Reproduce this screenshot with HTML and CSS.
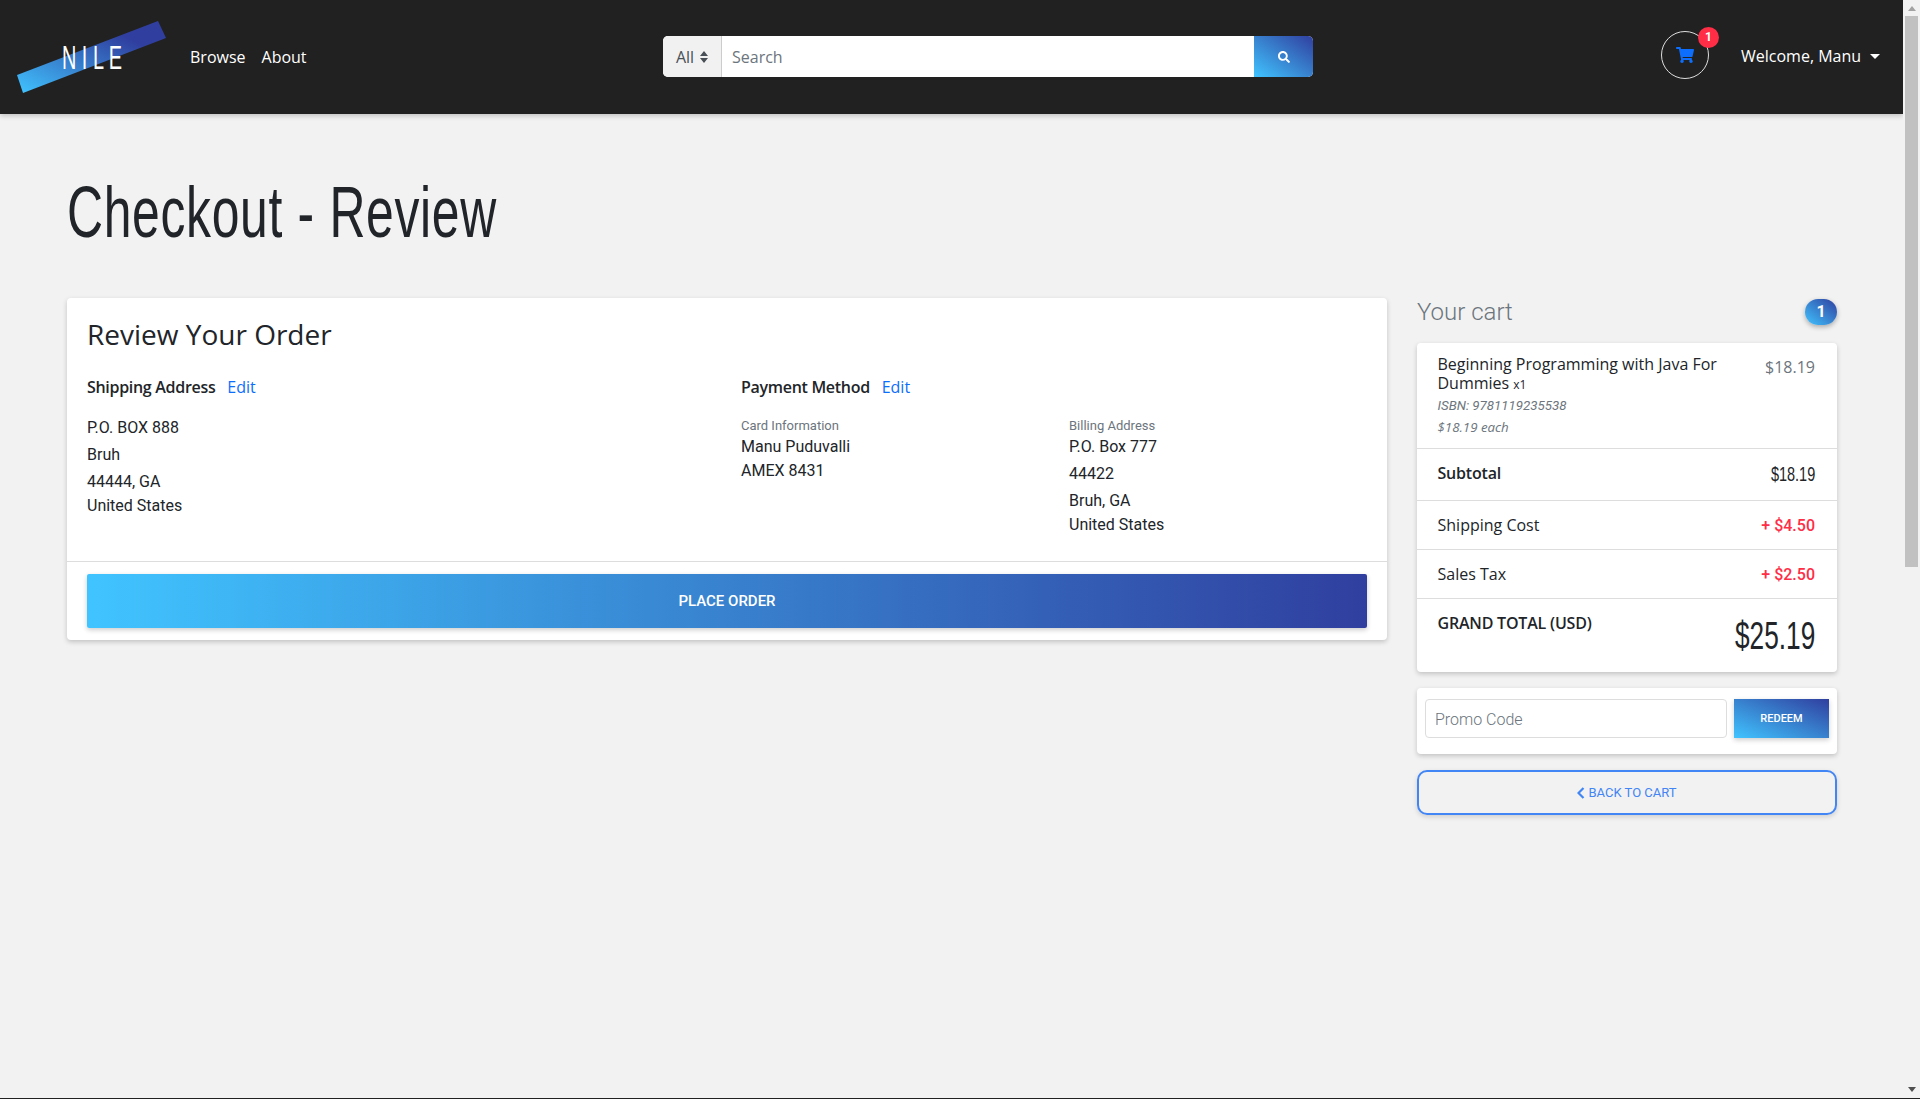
FILE: index.html
```html
<!DOCTYPE html>
<html lang="en">
<head>
    <meta charset="UTF-8">
    <title>Checkout - Review</title>
    <link rel="stylesheet" href="styles.css">
</head>
<body>
    <div class="view">
        <div class="page">
            <nav class="navbar">
                <a class="logo" href="#">
                    <svg width="170" height="114" viewBox="0 0 170 114">
                        <defs>
                            <linearGradient id="logoGrad" x1="0" y1="1" x2="1" y2="0">
                                <stop offset="0" stop-color="#40c4ff"/>
                                <stop offset="0.75" stop-color="#303f9f"/>
                            </linearGradient>
                        </defs>
                        <polygon points="17,75 158,21 166,38 23,93" fill="url(#logoGrad)"/>
                        <text x="62" y="69" class="logo-text" textLength="60" lengthAdjust="spacingAndGlyphs">N I L E</text>
                    </svg>
                </a>
                <a class="nav-link browse" href="#">Browse</a>
                <a class="nav-link" href="#">About</a>
                <form class="search">
                    <div class="search-select">All
                        <svg width="8" height="12" viewBox="0 0 8 12"><path d="M4 0l4 5H0zM4 12L0 7h8z" fill="#495057"/></svg>
                    </div>
                    <input class="search-input" type="text" placeholder="Search">
                    <button class="search-btn" type="button">
                        <svg width="12" height="12" viewBox="0 0 512 512"><path d="M505 442.700L405.300 343c-4.500-4.500-10.600-7-17-7H372c27.600-35.300 44-79.700 44-128C416 93.100 322.900 0 208 0S0 93.100 0 208s93.100 208 208 208c48.300 0 92.700-16.400 128-44v16.300c0 6.400 2.500 12.500 7 17l99.700 99.700c9.400 9.400 24.600 9.400 33.900 0l28.300-28.300c9.400-9.400 9.400-24.600.1-34zM208 336c-70.700 0-128-57.200-128-128 0-70.700 57.200-128 128-128 70.700 0 128 57.200 128 128 0 70.700-57.200 128-128 128z" fill="#fff"/></svg>
                    </button>
                </form>
                <a class="cart-link" href="#">
                    <svg width="18" height="16" viewBox="0 0 576 512"><path d="M528.120 301.319l47.273-208C578.806 78.301 567.391 64 551.990 64H159.208l-9.166-44.810C147.758 8.021 137.930 0 126.529 0H24C10.745 0 0 10.745 0 24v16c0 13.255 10.745 24 24 24h69.883l70.248 343.435C147.325 417.100 136 435.222 136 456c0 30.928 25.072 56 56 56s56-25.072 56-56c0-15.674-6.447-29.835-16.824-40h209.647C430.447 426.165 424 440.326 424 456c0 30.928 25.072 56 56 56s56-25.072 56-56c0-22.172-12.888-41.332-31.579-50.405l5.517-24.276c3.413-15.018-8.002-29.319-23.403-29.319H218.117l-6.545-32h293.145c11.206 0 20.920-7.754 23.403-18.681z" fill="#0d6efd"/></svg>
                    <span class="cart-badge">1</span>
                </a>
                <a class="welcome" href="#">Welcome, Manu<span class="caret"></span></a>
            </nav>

            <main class="content">
                <h1 class="page-title">Checkout - Review</h1>
                <div class="columns">
                    <section class="card review">
                        <div class="review-body">
                            <h2 class="review-title">Review Your Order</h2>
                            <div class="review-grid">
                                <div class="shipping">
                                    <h3 class="sub-head">Shipping Address <a href="#">Edit</a></h3>
                                    <p class="addr">P.O. BOX 888</p>
                                    <p class="addr">Bruh</p>
                                    <p class="addr tight">44444, GA</p>
                                    <p class="addr tight">United States</p>
                                </div>
                                <div class="payment">
                                    <h3 class="sub-head">Payment Method <a href="#">Edit</a></h3>
                                    <div class="payment-cols">
                                        <div>
                                            <small class="label">Card Information</small>
                                            <p class="addr tight">Manu Puduvalli</p>
                                            <p class="addr tight">AMEX 8431</p>
                                        </div>
                                        <div>
                                            <small class="label">Billing Address</small>
                                            <p class="addr">P.O. Box 777</p>
                                            <p class="addr">44422</p>
                                            <p class="addr tight">Bruh, GA</p>
                                            <p class="addr tight">United States</p>
                                        </div>
                                    </div>
                                </div>
                            </div>
                        </div>
                        <div class="review-foot">
                            <button class="place-order" type="button">PLACE ORDER</button>
                        </div>
                    </section>

                    <aside class="sidebar">
                        <div class="cart-head">
                            <span class="cart-title">Your cart</span>
                            <span class="cart-count">1</span>
                        </div>
                        <ul class="card summary">
                            <li class="row item">
                                <div class="item-info">
                                    <div class="item-name">Beginning Programming with Java For Dummies<small>x1</small></div>
                                    <div class="item-meta isbn">ISBN: 9781119235538</div>
                                    <div class="item-meta each">$18.19 each</div>
                                </div>
                                <span class="item-price">$18.19</span>
                            </li>
                            <li class="row subtotal">
                                <strong>Subtotal</strong>
                                <span class="narrow">$18.19</span>
                            </li>
                            <li class="row fee">
                                <span>Shipping Cost</span>
                                <span class="plus">+ $4.50</span>
                            </li>
                            <li class="row fee">
                                <span>Sales Tax</span>
                                <span class="plus">+ $2.50</span>
                            </li>
                            <li class="row total">
                                <strong>GRAND TOTAL (USD)</strong>
                                <span class="narrow grand">$25.19</span>
                            </li>
                        </ul>
                        <div class="card promo">
                            <input class="promo-input" type="text" placeholder="Promo Code">
                            <button class="redeem" type="button">REDEEM</button>
                        </div>
                        <button class="back" type="button">
                            <svg width="8" height="12" viewBox="0 0 8 12"><path d="M6.500 1L1.500 6l5 5" fill="none" stroke="#4285f4" stroke-width="2.200"/></svg>
                            BACK TO CART
                        </button>
                    </aside>
                </div>
            </main>
        </div>
        <div class="scrollbar">
            <span class="arrow-up"></span>
            <div class="thumb"></div>
            <span class="arrow-down"></span>
        </div>
    </div>
    <div class="page-end"></div>
</body>
</html>
```

FILE: styles.css
```css
* {
    box-sizing: border-box;
}
html, body {
    height: 100%;
}
body {
    margin: 0;
    overflow: hidden;
    display: flex;
    flex-direction: column;
    background: #f2f2f2;
    color: #212529;
    font-family: Roboto, sans-serif;
    font-size: 16px;
}
a {
    text-decoration: none;
}
p, h1, h2, h3, ul {
    margin: 0;
    padding: 0;
}
.view {
    flex: 1;
    display: flex;
    min-height: 0;
}
.page {
    flex: 1;
    min-width: 0;
}
.page-end {
    height: 1px;
    background: #212121;
}

/* navbar */
.navbar {
    height: 114px;
    background: #212121;
    box-shadow: 0 2px 5px rgba(0, 0, 0, 0.2);
    display: flex;
    align-items: center;
    font-family: "Open Sans", sans-serif;
}
.logo {
    width: 170px;
    height: 114px;
    flex: none;
    margin-right: 20px;
}
.logo-text {
    font-family: "Liberation Sans", sans-serif;
    font-size: 33px;
    fill: #fff;
}
.nav-link {
    color: #fff;
    font-size: 16px;
    margin-right: 16px;
}
.search {
    position: absolute;
    left: 663px;
    top: 36px;
    width: 650px;
    height: 41px;
    display: flex;
    border-radius: 5px;
    overflow: hidden;
    background: #fff;
}
.search-select {
    width: 59px;
    background: #f1f1f1;
    border-right: 1px solid #ccc;
    color: #495057;
    font-size: 16px;
    display: flex;
    align-items: center;
    justify-content: center;
    gap: 6px;
}
.search-input {
    flex: 1;
    min-width: 0;
    border: 0;
    padding: 0 10px;
    font: 16px "Open Sans", sans-serif;
}
.search-input::placeholder {
    color: #6c757d;
}
.search-btn {
    width: 59px;
    border: 0;
    padding: 0;
    background: linear-gradient(to top right, #40c4ff, #303f9f);
    display: flex;
    align-items: center;
    justify-content: center;
}
.cart-link {
    position: absolute;
    left: 1661px;
    top: 31px;
    width: 48px;
    height: 48px;
    border: 1px solid #ddd;
    border-radius: 50%;
    display: flex;
    align-items: center;
    justify-content: center;
}
.cart-badge {
    position: absolute;
    top: -5px;
    right: -11px;
    width: 21px;
    height: 21px;
    border-radius: 50%;
    background: #ff2d46;
    color: #fff;
    font: 700 12px/21px Roboto, sans-serif;
    text-align: center;
}
.welcome {
    position: absolute;
    left: 1741px;
    top: 45px;
    color: #fff;
    font-size: 16px;
}
.caret {
    display: inline-block;
    margin-left: 9px;
    vertical-align: 3px;
    border-top: 5px solid #fff;
    border-left: 5px solid transparent;
    border-right: 5px solid transparent;
}

/* content */
.content {
    padding: 0 66px 0 67px;
}
.page-title {
    height: 184px;
    padding-top: 56px;
    font-family: "Liberation Sans", sans-serif;
    font-size: 72px;
    font-weight: 400;
    line-height: 84px;
    letter-spacing: 1px;
    white-space: nowrap;
    transform: scaleX(0.692);
    transform-origin: left;
}
.columns {
    display: grid;
    grid-template-columns: 1320px 420px;
    gap: 30px;
    align-items: start;
}
.card {
    background: #fff;
    border-radius: 4px;
    box-shadow: 0 2px 5px rgba(0, 0, 0, 0.2);
}

/* review card */
.review-body {
    height: 264px;
    padding: 17px 20px 0;
    border-bottom: 1px solid #ddd;
}
.review-title {
    font: 400 28px/38px "Open Sans", sans-serif;
}
.review-grid {
    display: grid;
    grid-template-columns: 654px 1fr;
    margin-top: 22px;
}
.sub-head {
    font: 600 16px/24px "Open Sans", sans-serif;
    letter-spacing: -0.3px;
    margin-bottom: 17px;
}
.sub-head a {
    font-weight: 400;
    letter-spacing: 0;
    color: #0d6efd;
    margin-left: 8px;
}
.addr {
    line-height: 24px;
    margin-bottom: 3px;
}
.addr.tight {
    margin-bottom: 0;
}
.payment-cols {
    display: grid;
    grid-template-columns: 328px 1fr;
    padding-top: 1px;
}
.label {
    display: block;
    font-size: 13px;
    line-height: 18px;
    color: #6c757d;
}
.review-foot {
    padding: 12px 20px;
}
.place-order {
    display: block;
    width: 100%;
    height: 54px;
    border: 0;
    border-radius: 2px;
    background: linear-gradient(to right, #40c4ff, #303f9f);
    color: #fff;
    font: 500 15px Roboto, sans-serif;
    box-shadow: 0 2px 5px rgba(0, 0, 0, 0.2);
}

/* cart sidebar */
.cart-head {
    height: 45px;
    display: flex;
    justify-content: space-between;
    align-items: flex-start;
}
.cart-title {
    font: 300 24px/28px Roboto, sans-serif;
    color: #6c757d;
}
.cart-count {
    width: 32px;
    height: 26px;
    margin-top: 1px;
    border-radius: 13px;
    background: linear-gradient(to top right, #40c4ff, #303f9f);
    box-shadow: 0 2px 5px rgba(0, 0, 0, 0.3);
    color: #fff;
    font: 700 16px/26px Roboto, sans-serif;
    text-align: center;
}
.summary {
    list-style: none;
    font-family: "Open Sans", sans-serif;
}
.row {
    display: flex;
    justify-content: space-between;
    padding: 0 22px 0 20.500px;
    border-bottom: 1px solid #ddd;
}
.row:last-child {
    border-bottom: 0;
}
.item {
    height: 106px;
    padding-top: 12px;
}
.item-info {
    width: 300px;
}
.item-name {
    font-size: 16px;
    line-height: 19px;
}
.item-name small {
    font-size: 12px;
    line-height: 1;
    margin-left: 4px;
}
.item-meta {
    font-family: Roboto, sans-serif;
    font-size: 13.300px;
    font-style: italic;
    color: #6c757d;
}
.isbn {
    margin-top: 3px;
    line-height: 19px;
}
.each {
    margin-top: 3px;
    font-family: "Open Sans", sans-serif;
    line-height: 19px;
}
.item-price {
    margin-top: 1px;
    color: #6c757d;
}
.subtotal {
    height: 52px;
    padding-top: 13px;
}
.subtotal strong, .total strong {
    font-weight: 600;
    letter-spacing: -0.2px;
}
/* no Oswald here, so squeeze Liberation Sans to the same width */
.narrow {
    font-family: "Liberation Sans", sans-serif;
    font-size: 21px;
    transform: scaleX(0.69);
    transform-origin: right;
}
.fee {
    height: 49px;
    align-items: center;
}
.plus {
    color: #ff2d46;
    font-family: Roboto, sans-serif;
    font-weight: 500;
}
.total {
    height: 73px;
    padding-top: 13px;
}
.grand {
    font-size: 38px;
    line-height: 48px;
}
.promo {
    margin-top: 16px;
    height: 66px;
    padding: 11px 8px;
    display: flex;
    gap: 7px;
    align-items: flex-start;
}
.promo-input {
    flex: 1;
    min-width: 0;
    height: 39px;
    padding: 2px 9px 0;
    border: 1px solid #ddd;
    border-radius: 4px;
    font: 300 16px Roboto, sans-serif;
}
.promo-input::placeholder {
    color: #6c757d;
}
.redeem {
    width: 95px;
    height: 39px;
    border: 0;
    padding: 0;
    background: linear-gradient(to top right, #40c4ff, #303f9f);
    color: #fff;
    font: 500 11px Roboto, sans-serif;
    box-shadow: 0 2px 5px rgba(0, 0, 0, 0.2);
}
.back {
    display: flex;
    align-items: center;
    justify-content: center;
    gap: 3px;
    width: 100%;
    height: 45px;
    margin-top: 16px;
    border: 2px solid #4285f4;
    border-radius: 10px;
    background: transparent;
    color: #4285f4;
    font: 400 13px Roboto, sans-serif;
    box-shadow: 0 2px 5px rgba(0, 0, 0, 0.15);
}

/* browser scrollbar */
.scrollbar {
    width: 17px;
    flex: none;
    background: #f2f2f2;
    display: flex;
    flex-direction: column;
    align-items: center;
}
.arrow-up {
    margin-top: 6px;
    border-bottom: 5px solid #a3a3a3;
    border-left: 4px solid transparent;
    border-right: 4px solid transparent;
}
.thumb {
    width: 13px;
    height: 551px;
    margin-top: 5px;
    background: #c1c1c1;
}
.arrow-down {
    margin-top: auto;
    margin-bottom: 6px;
    border-top: 5px solid #505050;
    border-left: 4px solid transparent;
    border-right: 4px solid transparent;
}
```
